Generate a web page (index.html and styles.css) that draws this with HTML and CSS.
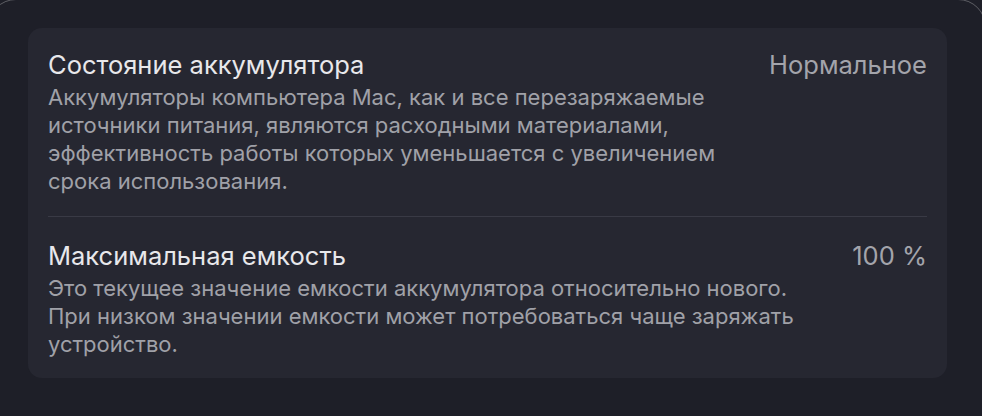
FILE: index.html
```html
<!DOCTYPE html>
<html lang="ru">
<head>
<meta charset="utf-8">
<link rel="stylesheet" href="styles.css">
</head>
<body>
<div class="window">
  <div class="frame"></div>
  <section class="card">
    <div class="row">
      <div class="text">
        <div class="title">Состояние аккумулятора</div>
        <p class="desc">Аккумуляторы компьютера Mac, как и все перезаряжаемые<br>источники питания, являются расходными материалами,<br>эффективность работы которых уменьшается с увеличением<br>срока использования.</p>
      </div>
      <div class="value">Нормальное</div>
    </div>
    <div class="sep"></div>
    <div class="row">
      <div class="text">
        <div class="title">Максимальная емкость</div>
        <p class="desc">Это текущее значение емкости аккумулятора относительно нового.<br>При низком значении емкости может потребоваться чаще заряжать<br>устройство.</p>
      </div>
      <div class="value">100 %</div>
    </div>
  </section>
</div>
</body>
</html>
```
FILE: styles.css
```css
html, body {
  margin: 0;
  padding: 0;
  background: #1e1f28;
  width: 982px;
  height: 416px;
  overflow: hidden;
}
.window {
  position: relative;
  width: 982px;
  height: 416px;
  box-sizing: border-box;
  padding: 28px 35px 0 28px;
  font-family: "Inter", "Liberation Sans", sans-serif;
  -webkit-font-smoothing: antialiased;
  overflow: hidden;
}
.frame {
  position: absolute;
  top: -1px;
  left: -12px;
  right: -4px;
  height: 520px;
  border: 1.5px solid rgba(255, 255, 255, 0.28);
  border-radius: 28px;
  pointer-events: none;
}
.card {
  background: #262731;
  border-radius: 14px;
  padding: 19px 20px 20px 20px;
}
.row {
  display: flex;
  justify-content: space-between;
  align-items: flex-start;
}
.title {
  color: #e8e8eb;
  font-size: 25.5px;
  line-height: 36px;
}
.desc {
  margin: 0;
  color: #a0a1a8;
  font-size: 22px;
  line-height: 28px;
}
.value {
  color: #a3a4ab;
  font-size: 25.5px;
  line-height: 36px;
  white-space: nowrap;
}
.sep {
  height: 1px;
  background: #393a45;
  margin: 21px 0 21px 0;
}
```
